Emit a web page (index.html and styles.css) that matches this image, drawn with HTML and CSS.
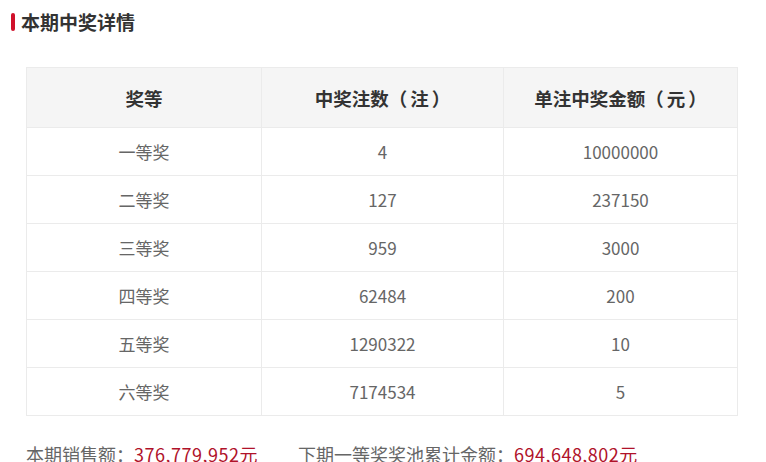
FILE: index.html
```html
<!DOCTYPE html>
<html lang="zh-CN">
<head>
<meta charset="utf-8">
<title>本期中奖详情</title>
<link rel="stylesheet" href="styles.css">
</head>
<body>
<div class="page">
  <h2 class="title"><span class="bar"></span>本期中奖详情</h2>
  <table class="prize">
    <colgroup><col class="c1"><col class="c2"><col class="c3"></colgroup>
    <thead>
      <tr><th>奖等</th><th>中奖注数<span class="open">（</span>注<span class="close">）</span></th><th>单注中奖金额<span class="open">（</span>元<span class="close">）</span></th></tr>
    </thead>
    <tbody>
      <tr><td>一等奖</td><td>4</td><td>10000000</td></tr>
      <tr><td>二等奖</td><td>127</td><td>237150</td></tr>
      <tr><td>三等奖</td><td>959</td><td>3000</td></tr>
      <tr><td>四等奖</td><td>62484</td><td>200</td></tr>
      <tr><td>五等奖</td><td>1290322</td><td>10</td></tr>
      <tr><td>六等奖</td><td>7174534</td><td>5</td></tr>
    </tbody>
  </table>
  <div class="summary">
    <span class="item">本期销售额：<em>376,779,952元</em></span>
    <span class="item">下期一等奖奖池累计金额：<em>694,648,802元</em></span>
  </div>
</div>
</body>
</html>
```
FILE: styles.css
```css
html, body {
  margin: 0;
  padding: 0;
  background: #fff;
}
body {
  font-family: "Noto Sans CJK SC", "Noto Sans", sans-serif;
  color: #666;
}
.page {
  padding: 0 0 0 11px;
}
.title {
  display: flex;
  align-items: center;
  gap: 6px;
  margin: 0;
  height: 44px;
  font-size: 19px;
  font-weight: bold;
  color: #333;
  line-height: 44px;
}
.bar {
  display: block;
  width: 4px;
  height: 18px;
  background: #d0112b;
  border-radius: 2px;
}
.prize {
  margin: 23px 0 0 15px;
  width: 711px;
  border-collapse: collapse;
  table-layout: fixed;
}
.c1 { width: 235px; }
.c2 { width: 242px; }
.c3 { width: 234px; }
.prize th, .prize td {
  border: 1px solid #ebebeb;
  text-align: center;
  padding: 0;
}
.prize th {
  height: 59px;
  background: #f5f5f5;
  color: #333;
  font-size: 18.5px;
  font-weight: bold;
}
.open {
  margin: 0 3px 0 0;
}
.close {
  margin: 0 0 0 3px;
}
.prize td {
  height: 47px;
  font-size: 17px;
  color: #666;
}
.summary {
  display: flex;
  gap: 40px;
  margin: 25px 0 0 15px;
  font-size: 18px;
  line-height: 26px;
  color: #666;
}
.summary em {
  font-style: normal;
  color: #b0122a;
  letter-spacing: 0.5px;
}
```
